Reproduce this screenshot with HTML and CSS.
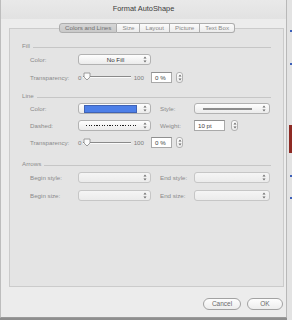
FILE: index.html
```html
<!DOCTYPE html>
<html lang="en">
<head>
  <meta charset="UTF-8">
  <title>Format AutoShape</title>
  <link rel="stylesheet" href="styles.css">
</head>
<body>
  <div class="screen">
    <div class="window">
      <div class="titlebar">Format AutoShape</div>
      <div class="content">
        <div class="tabs">
          <span class="tab active">Colors and Lines</span>
          <span class="tab">Size</span>
          <span class="tab">Layout</span>
          <span class="tab">Picture</span>
          <span class="tab">Text Box</span>
        </div>

        <div class="panel">
          <!-- Fill -->
          <div class="section fill">
            <div class="sec-head"><span>Fill</span><i></i></div>
            <div class="row tall">
              <span class="label">Color:</span>
              <div class="popup short">
                <span class="popup-text">No Fill</span>
                <svg class="arrows" viewBox="0 0 4 7"><path d="M2 0.5L3.5 2.6H0.5Z M2 6.5L3.5 4.4H0.5Z"/></svg>
              </div>
            </div>
            <div class="row tall">
              <span class="label">Transparency:</span>
              <div class="slider">
                <span>0</span>
                <div class="track">
                  <svg class="knob" viewBox="0 0 8 9"><path d="M1 1H7V5L4 8L1 5Z"/></svg>
                </div>
                <span>100</span>
              </div>
              <div class="field pct">0 %</div>
              <div class="stepper"><svg class="arrows" viewBox="0 0 4 7"><path d="M2 0.5L3.5 2.6H0.5Z M2 6.5L3.5 4.4H0.5Z"/></svg></div>
            </div>
          </div>

          <!-- Line -->
          <div class="section line">
            <div class="sec-head"><span>Line</span><i></i></div>
            <div class="row">
              <span class="label">Color:</span>
              <div class="popup short">
                <span class="swatch"></span>
                <svg class="arrows" viewBox="0 0 4 7"><path d="M2 0.5L3.5 2.6H0.5Z M2 6.5L3.5 4.4H0.5Z"/></svg>
              </div>
              <span class="label right">Style:</span>
              <div class="popup long">
                <span class="solid-line"></span>
                <svg class="arrows" viewBox="0 0 4 7"><path d="M2 0.5L3.5 2.6H0.5Z M2 6.5L3.5 4.4H0.5Z"/></svg>
              </div>
            </div>
            <div class="row">
              <span class="label">Dashed:</span>
              <div class="popup short">
                <span class="dot-line"></span>
                <svg class="arrows" viewBox="0 0 4 7"><path d="M2 0.5L3.5 2.6H0.5Z M2 6.5L3.5 4.4H0.5Z"/></svg>
              </div>
              <span class="label right">Weight:</span>
              <div class="field weight">10 pt</div>
              <div class="stepper narrow"><svg class="arrows" viewBox="0 0 4 7"><path d="M2 0.5L3.5 2.6H0.5Z M2 6.5L3.5 4.4H0.5Z"/></svg></div>
            </div>
            <div class="row">
              <span class="label">Transparency:</span>
              <div class="slider">
                <span>0</span>
                <div class="track">
                  <svg class="knob" viewBox="0 0 8 9"><path d="M1 1H7V5L4 8L1 5Z"/></svg>
                </div>
                <span>100</span>
              </div>
              <div class="field pct">0 %</div>
              <div class="stepper"><svg class="arrows" viewBox="0 0 4 7"><path d="M2 0.5L3.5 2.6H0.5Z M2 6.5L3.5 4.4H0.5Z"/></svg></div>
            </div>
          </div>

          <!-- Arrows -->
          <div class="section arrows-sec">
            <div class="sec-head"><span>Arrows</span><i></i></div>
            <div class="row tall">
              <span class="label">Begin style:</span>
              <div class="popup short off">
                <svg class="arrows" viewBox="0 0 4 7"><path d="M2 0.5L3.5 2.6H0.5Z M2 6.5L3.5 4.4H0.5Z"/></svg>
              </div>
              <span class="label right">End style:</span>
              <div class="popup long off">
                <svg class="arrows" viewBox="0 0 4 7"><path d="M2 0.5L3.5 2.6H0.5Z M2 6.5L3.5 4.4H0.5Z"/></svg>
              </div>
            </div>
            <div class="row tall">
              <span class="label">Begin size:</span>
              <div class="popup short off">
                <svg class="arrows" viewBox="0 0 4 7"><path d="M2 0.5L3.5 2.6H0.5Z M2 6.5L3.5 4.4H0.5Z"/></svg>
              </div>
              <span class="label right">End size:</span>
              <div class="popup long off">
                <svg class="arrows" viewBox="0 0 4 7"><path d="M2 0.5L3.5 2.6H0.5Z M2 6.5L3.5 4.4H0.5Z"/></svg>
              </div>
            </div>
          </div>
        </div>

        <div class="buttons">
          <button class="btn cancel">Cancel</button>
          <button class="btn ok">OK</button>
        </div>
      </div>
    </div>

    <div class="backdrop">
      <span class="mark blue m1"></span>
      <span class="mark blue m2"></span>
      <span class="mark red m3"></span>
      <span class="mark blue m4"></span>
      <span class="mark blue m5"></span>
    </div>
  </div>
</body>
</html>
```

FILE: styles.css
```css
* {
  box-sizing: border-box;
}
body {
  margin: 0;
  background-color: #8e8e8e;
  font-family: "Liberation Sans", Arial, sans-serif;
  color: #8a8a8a;
}
.screen {
  display: flex;
  width: 292px;
  height: 320px;
}
.window {
  width: 287px;
  height: 318px;
  background-color: #ececec;
  border-left: 1px solid #bdbdbd;
  border-right: 1px solid #b8b8b8;
  border-bottom: 1px solid #9a9a9a;
  display: flex;
  flex-direction: column;
}
.titlebar {
  height: 19px;
  padding-top: 4px;
  text-align: center;
  font-size: 7.4px;
  line-height: 9px;
  color: #3c3c3c;
  background: linear-gradient(#e9e9e9, #e2e2e2);
}
.content {
  flex: 1;
  padding: 4px 2px 0 8px;
  display: flex;
  flex-direction: column;
}

/* tabs sit on top of the panel border */
.tabs {
  display: flex;
  justify-content: center;
  position: relative;
  z-index: 1;
  padding-left: 1px;
}
.tab {
  height: 10px;
  padding: 0 5px;
  font-size: 6.2px;
  line-height: 8px;
  color: #8a8a8a;
  background: linear-gradient(#fbfbfb, #ececec);
  border: 1px solid #adadad;
  border-left: none;
}
.tab:first-child {
  border-left: 1px solid #adadad;
  border-radius: 3px 0 0 3px;
}
.tab:last-child {
  border-radius: 0 3px 3px 0;
}
.tab.active {
  background: linear-gradient(#d6d6d6, #c9c9c9);
  color: #6f6f6f;
}

.panel {
  margin-top: -5px;
  height: 259px;
  background-color: #e4e4e4;
  border: 1px solid #cbcbcb;
  padding: 11px 12px 0 12px;
}
.section.line {
  margin-top: 4px;
}
.section.arrows-sec {
  margin-top: 7px;
}
.sec-head {
  display: flex;
  align-items: flex-end;
  height: 10px;
  font-size: 6.2px;
  line-height: 9px;
  color: #8c8c8c;
}
.sec-head i {
  flex: 1;
  height: 1px;
  margin: 0 0 2px 3px;
  background-color: #c6c6c6;
}
.row {
  display: flex;
  align-items: center;
  height: 17px;
  padding-left: 8px;
  font-size: 6.2px;
}
.row.tall {
  height: 18px;
}
.label {
  width: 48px;
  color: #8a8a8a;
}
.label.right {
  width: 34px;
  margin-left: 9px;
}

/* popup buttons */
.popup {
  position: relative;
  display: flex;
  align-items: center;
  height: 11px;
  border: 1px solid #b2b2b2;
  border-radius: 3px;
  background: linear-gradient(#fefefe, #ebebeb);
  padding: 0 3px 0 5px;
}
.popup.short {
  width: 73px;
}
.popup.long {
  width: 76px;
}
.popup.off {
  border-color: #c6c6c6;
  background: linear-gradient(#f5f5f5, #ebebeb);
}
.popup .arrows {
  margin-left: auto;
}
.popup-text {
  flex: 1;
  text-align: center;
  color: #333;
  padding-left: 4px;
}
.arrows {
  width: 4px;
  height: 7px;
  fill: #6a6a6a;
}
.swatch {
  width: 53px;
  height: 8px;
  background-color: #4d7fe8;
  border: 1px solid #3f62b4;
}
.solid-line {
  width: 49px;
  height: 2px;
  margin-left: 3px;
  background-color: #8c8c8c;
}
.dot-line {
  width: 50px;
  height: 1.5px;
  margin-left: 2px;
  background-image: repeating-linear-gradient(90deg, #1e1e1e 0 1.2px, transparent 1.2px 2.6px);
}

/* slider */
.slider {
  display: flex;
  align-items: center;
  width: 73px;
  padding-right: 7px;
  color: #7e7e7e;
}
.track {
  flex: 1;
  position: relative;
  height: 2px;
  margin: 0 3px 0 2px;
  border-top: 1px solid #8a8a8a;
  border-bottom: 1px solid #fafafa;
}
.knob {
  position: absolute;
  left: 0;
  top: -5px;
  width: 8px;
  height: 9px;
  fill: #fbfbfb;
  stroke: #888;
  stroke-width: 0.8;
}

/* text fields */
.field {
  height: 11px;
  background-color: #fff;
  border: 1px solid #a9a9a9;
  border-top-color: #8f8f8f;
  padding: 0 3px;
  line-height: 9px;
  color: #444;
}
.field.pct {
  width: 21px;
}
.field.weight {
  width: 31px;
}
.stepper {
  display: flex;
  align-items: center;
  justify-content: center;
  width: 7px;
  height: 11px;
  margin-left: 4px;
  border: 1px solid #b2b2b2;
  border-radius: 3px;
  background: linear-gradient(#fdfdfd, #ececec);
}
.stepper.narrow {
  margin-left: 6px;
}

/* bottom buttons */
.buttons {
  display: flex;
  justify-content: flex-end;
  gap: 6px;
  margin-top: 11px;
  padding-right: 1px;
}
.btn {
  height: 12px;
  padding: 0;
  border: 1px solid #a2a2a2;
  border-radius: 6px;
  background: linear-gradient(#fdfdfd, #ededed);
  font-family: "Liberation Sans", Arial, sans-serif;
  font-size: 6.5px;
  line-height: 10px;
  color: #6a6a6a;
}
.btn.cancel {
  width: 38px;
}
.btn.ok {
  width: 36px;
}

/* desktop strip on the right */
.backdrop {
  flex: 1;
  background-color: #e3e3e3;
  display: flex;
  flex-direction: column;
  align-items: flex-end;
}
.mark {
  display: block;
  width: 2px;
}
.mark.blue {
  height: 2px;
  background-color: #3c5fb8;
}
.mark.red {
  width: 3px;
  background-color: #8e2a24;
}
.m1 { margin-top: 30px; }
.m2 { margin-top: 31px; }
.m3 { margin-top: 60px; height: 28px; }
.m4 { margin-top: 22px; }
.m5 { margin-top: 20px; }
```
